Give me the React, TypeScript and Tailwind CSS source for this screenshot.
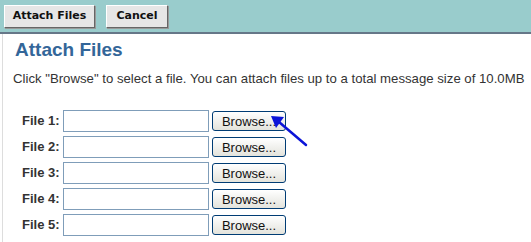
const rows = [1, 2, 3, 4, 5];

const ToolbarButton = ({ label, w }: { label: string; w: string }) => (
  <button
    className={`${w} h-[23px] bg-[#e6e6e6] border border-t-white border-l-white border-b-[#666] border-r-[#666] shadow-[1px_1px_0_#999] text-[11px] font-bold text-[#111] font-['DejaVu_Sans',sans-serif]`}
  >
    {label}
  </button>
);

const App = () => {
  return (
    <div className="w-[531px] h-[242px] bg-white overflow-hidden font-['Liberation_Sans',Arial,sans-serif]">
      <div className="h-[32px] bg-[#99cccc] flex items-center gap-[11px] px-[4px]">
        <ToolbarButton label="Attach Files" w="w-[91px]" />
        <ToolbarButton label="Cancel" w="w-[62px]" />
      </div>
      <div className="h-[2px] bg-[#667788]" />
      <div className="relative h-[208px] border-l border-[#dddddd] ml-[2px]">
        <h1 className="pl-[12px] pt-[4px] text-[19px] font-bold text-[#336699] leading-[24px]">Attach Files</h1>
        <p className="pl-[10px] mt-[9px] text-[13.2px] text-[#333] leading-[16px] whitespace-nowrap">
          Click "Browse" to select a file. You can attach files up to a total message size of 10.0MB
        </p>
        <div className="mt-[23px] flex flex-col gap-[4px]">
          {rows.map((n) => (
            <div key={n} className="flex items-center h-[22px]">
              <span className="w-[60px] pl-[19px] text-[13px] font-bold text-[#333]">File {n}:</span>
              <div className="w-[146px] h-[22px] border border-[#7f9db9] bg-white" />
              <button className="ml-[3px] w-[74px] h-[20px] rounded-[3px] border border-[#003c74] bg-gradient-to-b from-white to-[#e3e3dc] text-[13px] text-[#111] leading-none">
                Browse...
              </button>
            </div>
          ))}
        </div>
        <svg className="absolute left-[264px] top-[80px]" width="45" height="35" viewBox="0 0 45 35">
          <line x1="12" y1="8" x2="39" y2="31" stroke="#0b14d8" strokeWidth="2.5" strokeLinecap="round" />
          <polygon points="4,2 17,3 9,14" fill="#0b14d8" />
        </svg>
      </div>
    </div>
  );
};

export default App;
